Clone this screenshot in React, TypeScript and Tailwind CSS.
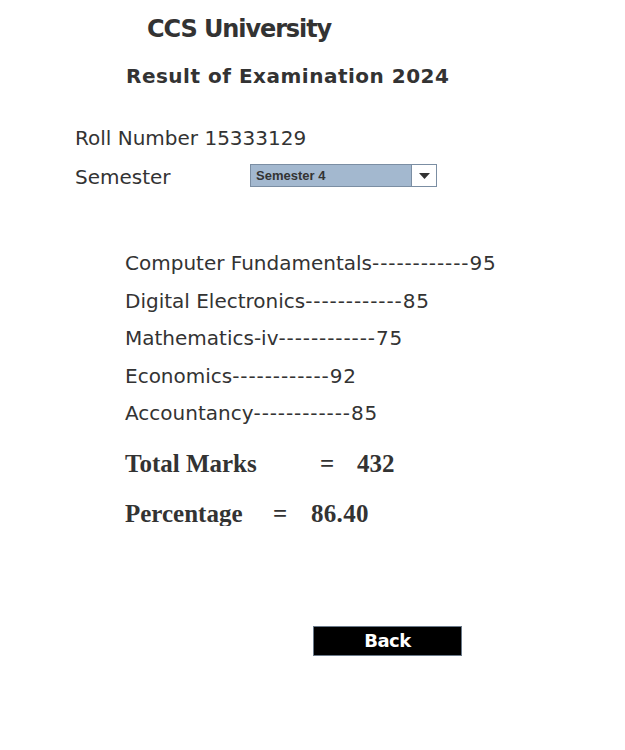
const subjects = [
  { name: "Computer Fundamentals", marks: 95 },
  { name: "Digital Electronics", marks: 85 },
  { name: "Mathematics-iv", marks: 75 },
  { name: "Economics", marks: 92 },
  { name: "Accountancy", marks: 85 },
];

export default function App() {
  return (
    <div className="w-[625px] h-[750px] bg-white text-[#333] font-['DejaVu_Sans',sans-serif]">
      {/* Header */}
      <h1 className="pl-[147px] pt-[14px] text-[24px] leading-[30px] font-bold tracking-[-1.1px]">
        CCS University
      </h1>
      <h2 className="pl-[126px] mt-[20px] text-[20px] leading-[24px] font-bold tracking-[0.5px]">
        Result of Examination 2024
      </h2>

      {/* Student info */}
      <div className="pl-[75px] mt-[38px] text-[20px] leading-[24px]">
        <p>Roll Number 15333129</p>
        <div className="flex items-start mt-[15px]">
          <span className="w-[175px]">Semester</span>
          <div className="flex w-[187px] h-[23px] -mt-[1px] border border-[#7b8ea3] bg-white">
            <div className="flex-1 bg-[#a3b8cf] border-r border-[#7b8ea3] px-[5px] flex items-center text-[13px] font-bold text-[#333] font-['Liberation_Sans',sans-serif]">
              Semester 4
            </div>
            <div className="w-[24px] flex items-center justify-center">
              <svg width="11" height="6" viewBox="0 0 11 6">
                <path d="M0 0 L11 0 L5.5 6 Z" fill="#333" />
              </svg>
            </div>
          </div>
        </div>
      </div>

      {/* Marks */}
      <div className="pl-[125px] mt-[62px] text-[20px] leading-[24px]">
        {subjects.map((s) => (
          <p key={s.name} className="h-[37.5px]">
            {s.name}
            <span className="tracking-[0.9px]">------------</span>
            <span className="tracking-[0.8px]">{s.marks}</span>
          </p>
        ))}
      </div>

      {/* Totals */}
      <div className="pl-[125px] mt-[7px] font-['Liberation_Serif',serif] font-bold text-[25px] text-[#333]">
        <div className="flex h-[36px] items-center">
          <span className="w-[195px]">Total Marks</span>
          <span className="w-[37px]">=</span>
          <span>432</span>
        </div>
        <div className="flex h-[28px] items-end overflow-hidden mt-[16px]">
          <span className="w-[148px] leading-[34px] translate-y-[5px]">Percentage</span>
          <span className="w-[38px] leading-[34px] translate-y-[5px]">=</span>
          <span className="leading-[34px] translate-y-[5px] tracking-[0.3px]">86.40</span>
        </div>
      </div>

      {/* Back */}
      <div className="pl-[313px] mt-[100px]">
        <button className="w-[149px] h-[30px] bg-black border border-[#6b7a8a] text-white font-bold text-[18px] font-['DejaVu_Sans',sans-serif] leading-none tracking-[-0.5px]">
          Back
        </button>
      </div>
    </div>
  );
}
